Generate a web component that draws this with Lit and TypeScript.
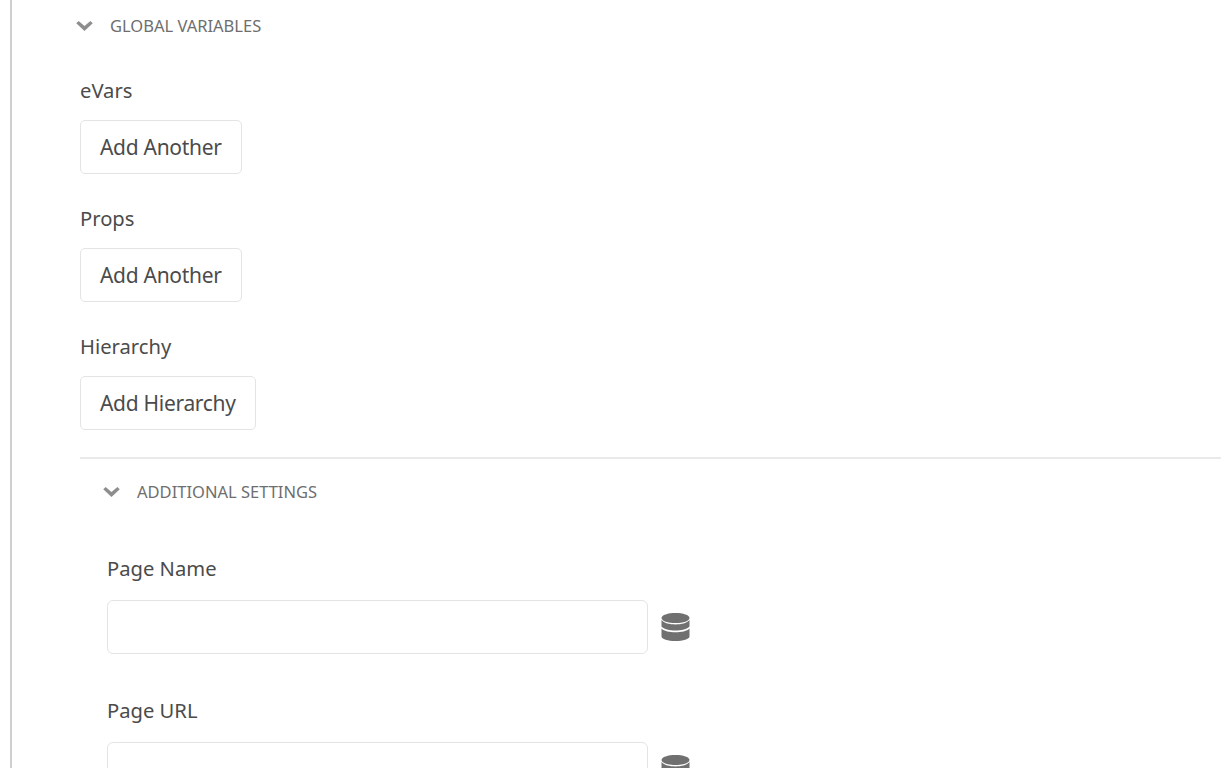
import { LitElement, html, css } from 'lit';
import { customElement } from 'lit/decorators.js';

const chevron = html`<svg class="chevron" viewBox="0 0 18 12"><path d="M0 2.4 L2.6 0 L9 5.4 L15.4 0 L18 2.4 L9 11 Z" /></svg>`;

const dbIcon = html`<svg class="db" viewBox="0 0 29 28">
  <path d="M0.5 5 C0.5 2 7 0 14.5 0 C22 0 28.5 2 28.5 5 C28.5 8 22 10 14.5 10 C7 10 0.5 8 0.5 5 Z" />
  <path d="M0.5 7 C3 10.2 8.5 11.4 14.5 11.4 C20.5 11.4 26 10.2 28.5 7 V13.6 C26 16.4 20.5 17.6 14.5 17.6 C8.5 17.6 3 16.4 0.5 13.6 Z" />
  <path d="M0.5 15.4 C3 18 8.5 19.2 14.5 19.2 C20.5 19.2 26 18 28.5 15.4 V23.5 C28.5 26.2 22 28 14.5 28 C7 28 0.5 26.2 0.5 23.5 Z" />
</svg>`;

@customElement('app-root')
export class AppRoot extends LitElement {
  static styles = css`
    :host {
      display: block;
      height: 768px;
      overflow: hidden;
      background: #fff;
      font-family: 'Noto Sans', sans-serif;
      color: #4b4b4b;
    }
    .page {
      margin-left: 10px;
      height: 768px;
      box-sizing: border-box;
      border-left: 2px solid #cfcfcf;
      padding-left: 64px;
      padding-top: 13px;
    }
    .head {
      display: flex;
      align-items: center;
      height: 26px;
      font-size: 16.5px;
      color: #6e6e6e;
      gap: 17px;
    }
    .head span {
      padding-bottom: 2px;
    }
    .chevron {
      width: 17px;
      height: 11px;
      fill: #8e8e8e;
      flex: none;
    }
    .group {
      margin-left: 4px;
    }
    .label {
      font-size: 20.2px;
      line-height: 24px;
      height: 26px;
      margin-top: 32px;
      margin-bottom: 16px;
      color: #4b4b4b;
    }
    .group > .label:first-child {
      margin-top: 39px;
    }
    .btn {
      display: block;
      box-sizing: border-box;
      height: 54px;
      padding: 0 19px;
      border: 1px solid #e4e4e4;
      border-radius: 5px;
      background: #fff;
      font: inherit;
      font-size: 21px;
      letter-spacing: -0.3px;
      color: #4b4b4b;
    }
    .divider {
      height: 2px;
      background: #eaeaea;
      margin-top: 27px;
    }
    .nested {
      margin-left: 27px;
    }
    .nested .head {
      margin-top: 20px;
      margin-left: -4px;
    }
    .nested .label {
      margin-top: 44px;
      margin-bottom: 18px;
    }
    .nested .head + .label {
      margin-top: 51px;
    }
    .field {
      display: flex;
      align-items: center;
      gap: 13px;
    }
    .input {
      box-sizing: border-box;
      width: 541px;
      height: 54px;
      border: 1px solid #e4e4e4;
      border-radius: 6px;
      background: #fff;
    }
    .db {
      width: 29px;
      height: 28px;
      fill: #707070;
      margin-top: -1px;
    }
  `;

  render() {
    return html`
      <div class="page">
        <div class="head">${chevron}<span>GLOBAL VARIABLES</span></div>
        <div class="group">
          <div class="label">eVars</div>
          <button class="btn">Add Another</button>
          <div class="label">Props</div>
          <button class="btn">Add Another</button>
          <div class="label">Hierarchy</div>
          <button class="btn">Add Hierarchy</button>
          <div class="divider"></div>
          <div class="nested">
            <div class="head">${chevron}<span>ADDITIONAL SETTINGS</span></div>
            <div class="label">Page Name</div>
            <div class="field"><div class="input"></div>${dbIcon}</div>
            <div class="label">Page URL</div>
            <div class="field"><div class="input"></div>${dbIcon}</div>
          </div>
        </div>
      </div>
    `;
  }
}
